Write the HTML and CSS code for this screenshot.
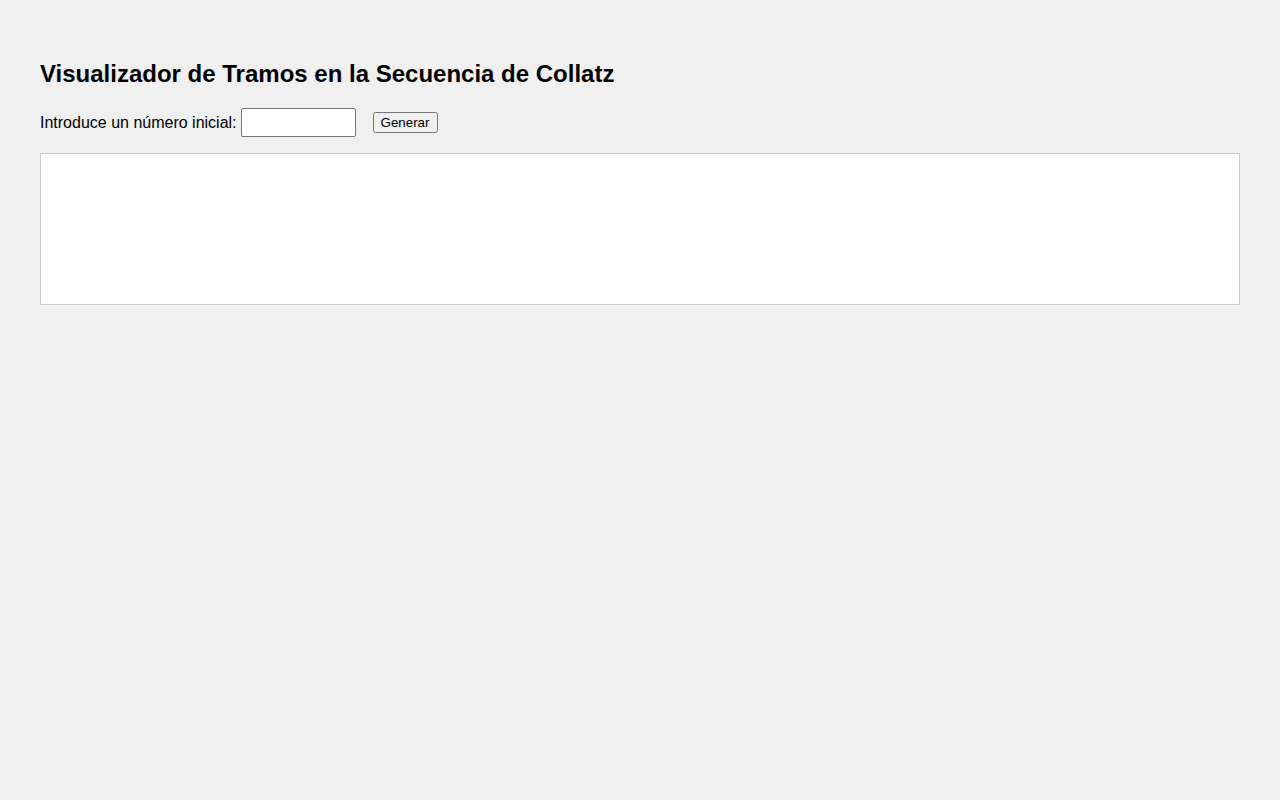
FILE: index.html
```html
<!DOCTYPE html>
<html>

    <head>
        <title>Visualizador de Tramos en la Secuencia de Collatz</title>
        <link rel="stylesheet" href="styles.css">
    </head>

    <body>
        <h1>Visualizador de Tramos en la Secuencia de Collatz</h1>
        <div class="controles">
            <label for="numeroInicial">Introduce un número inicial:</label>
            <input type="number" id="numeroInicial">
            <button id="btnGenerar">Generar</button>
        </div>
        <canvas id="lienzo" width="1198" height="150"></canvas>
    </body>

</html>
```

FILE: styles.css
```css
body {
    margin: 0;
    padding: 40px;
    font-family: "Liberation Sans", Arial, sans-serif;
    background-color: #f0f0f0;
}

h1 {
    font-size: 24px;
    margin: 20px 0;
}

.controles {
    display: flex;
    align-items: center;
    font-size: 16px;
    margin-bottom: 16px;
}

.controles input {
    box-sizing: border-box;
    width: 115px;
    height: 29px;
    margin: 0 0 0 4px;
    border: 1px solid #767676;
    border-radius: 2px;
    background-color: #fff;
    font-size: 16px;
}

.controles button {
    margin-left: 17px;
    font-family: "Liberation Sans", Arial, sans-serif;
    font-size: 13.33px;
    padding: 1px 7px 1px 6px;
}

#lienzo {
    display: block;
    width: 1200px;
    height: 152px;
    box-sizing: border-box;
    border: 1px solid #ccc;
    background-color: #fff;
}
```
